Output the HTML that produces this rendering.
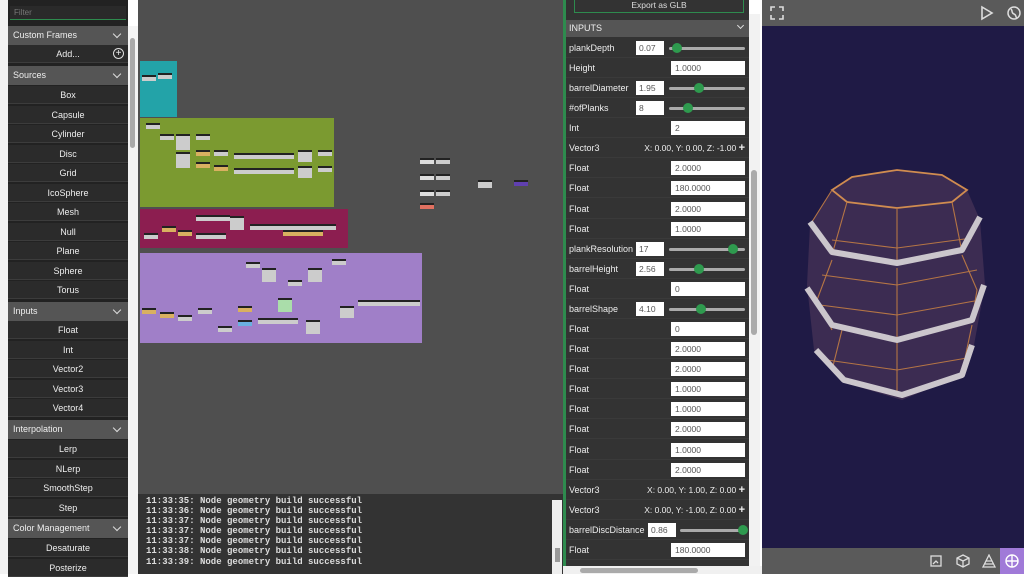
<!DOCTYPE html>
<html><head><meta charset="utf-8"><style>
*{margin:0;padding:0;box-sizing:border-box}
body{width:1024px;height:574px;overflow:hidden;background:#fff;font-family:"Liberation Sans",sans-serif;position:relative}
.a{position:absolute}
#left{left:8px;top:0;width:120px;height:574px;background:#222}
.it{position:absolute;left:0;width:120px;height:18px;background:#2b2b2b;border-bottom:1px solid #3c3c3c;color:#eee;font-size:9px;text-align:center;line-height:18px}
.hd{position:absolute;left:0;width:120px;height:19px;background:#555;color:#eee;font-size:9px;line-height:19px;padding-left:5px}
.hd:after{content:"";position:absolute;right:8px;top:5px;width:5px;height:5px;border-right:1.5px solid #ddd;border-bottom:1.5px solid #ddd;transform:rotate(45deg)}
#graph{left:138px;top:0;width:426px;height:494px;background:#4f4f4f}
.n{position:absolute;height:6px;width:14px;background:#ccc;border-top:2px solid #222}
#log{left:138px;top:494px;width:426px;height:80px;background:#333;font-family:"Liberation Mono",monospace;font-size:9px;color:#ddd;padding:2px 0 0 8px;line-height:10.1px;font-weight:bold}
#props{left:563px;top:0;width:186px;height:574px;background:#333;border-left:3px solid #2e8b4e}
.r{position:absolute;left:0;width:183px;height:20px;border-bottom:1px solid #3a3a3a;color:#eee;font-size:9px;line-height:20px}
.r .l{position:absolute;left:3px}
.r .v{position:absolute;left:105px;top:3px;width:74px;height:14px;background:#fff;color:#555;font-size:8.5px;line-height:14px;padding-left:4px}
.r .s{position:absolute;top:3px;height:14px;width:28px;background:#fff;color:#555;font-size:8.5px;line-height:14px;padding-left:3px}
.r .tr{position:absolute;top:9px;height:3px;background:#aaa;border-radius:2px}
.r .k{position:absolute;top:5px;width:10px;height:10px;border-radius:50%;background:#2e9a4e}
.r .x{position:absolute;right:4px;font-size:8.5px}
#view{left:762px;top:0;width:262px;height:574px;background:#1f1a45}
</style></head><body>
<div class="a" style="left:0;top:0;width:8px;height:574px;background:#f2f2f2"></div>
<div id="left" class="a">
<div class="a" style="left:2px;top:6px;width:116px;height:14px;background:#2a2a2a;border-bottom:1px solid #2e8b4e;color:#777;font-size:8px;padding-left:4px;line-height:14px">Filter</div>
<div class="hd" style="top:26px">Custom Frames</div>
<div class="it" style="top:45px">Add...<span style="position:absolute;right:4px;top:3px;width:11px;height:11px;border:1px solid #ddd;border-radius:50%;line-height:9px;font-size:10px">+</span></div>
<div class="hd" style="top:66px">Sources</div>
<div class="it" style="top:86px">Box</div><div class="it" style="top:105.5px">Capsule</div><div class="it" style="top:125px">Cylinder</div><div class="it" style="top:144.5px">Disc</div><div class="it" style="top:164px">Grid</div><div class="it" style="top:183.5px">IcoSphere</div><div class="it" style="top:203px">Mesh</div><div class="it" style="top:222.5px">Null</div><div class="it" style="top:242px">Plane</div><div class="it" style="top:261.5px">Sphere</div><div class="it" style="top:281px">Torus</div>
<div class="hd" style="top:302px">Inputs</div>
<div class="it" style="top:321px">Float</div><div class="it" style="top:340.5px">Int</div><div class="it" style="top:360px">Vector2</div><div class="it" style="top:379.5px">Vector3</div><div class="it" style="top:399px">Vector4</div>
<div class="hd" style="top:420px">Interpolation</div>
<div class="it" style="top:440px">Lerp</div><div class="it" style="top:459.5px">NLerp</div><div class="it" style="top:479px">SmoothStep</div><div class="it" style="top:498.5px">Step</div>
<div class="hd" style="top:519px">Color Management</div>
<div class="it" style="top:539px">Desaturate</div><div class="it" style="top:558.5px">Posterize</div>
</div>
<div class="a" style="left:128px;top:26px;width:10px;height:548px;background:#f4f4f4"></div>
<div class="a" style="left:130px;top:38px;width:5px;height:110px;background:#aaa;border-radius:3px"></div>
<div id="graph" class="a">
<div class="a" style="left:2px;top:61px;width:37px;height:56px;background:#23a3a8"></div>
<div class="a" style="left:2px;top:118px;width:194px;height:89px;background:#7b9a30"></div>
<div class="a" style="left:2px;top:209px;width:208px;height:39px;background:#8c1e50"></div>
<div class="a" style="left:2px;top:253px;width:282px;height:90px;background:#a07fc8"></div>
<div class="n" style="left:4px;top:75px"></div><div class="n" style="left:20px;top:73px"></div>
<div class="n" style="left:8px;top:123px"></div><div class="n" style="left:22px;top:134px"></div><div class="n" style="left:38px;top:134px;height:16px"></div><div class="n" style="left:38px;top:152px;height:16px"></div><div class="n" style="left:58px;top:134px"></div><div class="n" style="left:58px;top:150px;background:#d9b060"></div><div class="n" style="left:58px;top:162px;background:#d9b060"></div><div class="n" style="left:76px;top:150px"></div><div class="n" style="left:76px;top:165px;background:#d9b060"></div><div class="n" style="left:96px;top:153px;width:60px"></div><div class="n" style="left:96px;top:168px;width:60px"></div><div class="n" style="left:160px;top:150px;height:12px"></div><div class="n" style="left:160px;top:166px;height:12px"></div><div class="n" style="left:180px;top:150px"></div><div class="n" style="left:180px;top:166px"></div>
<div class="n" style="left:6px;top:233px"></div><div class="n" style="left:24px;top:226px;background:#d9b060"></div><div class="n" style="left:40px;top:230px;background:#d9b060"></div><div class="n" style="left:58px;top:215px;width:34px"></div><div class="n" style="left:92px;top:216px;height:14px"></div><div class="n" style="left:58px;top:233px;width:30px"></div><div class="n" style="left:112px;top:224px;width:86px"></div><div class="n" style="left:145px;top:230px;background:#d9b060;width:40px"></div>
<div class="n" style="left:108px;top:262px"></div><div class="n" style="left:124px;top:268px;height:14px"></div><div class="n" style="left:194px;top:259px"></div><div class="n" style="left:170px;top:268px;height:14px"></div><div class="n" style="left:150px;top:280px"></div><div class="n" style="left:140px;top:298px;background:#ada;height:14px"></div><div class="n" style="left:4px;top:308px;background:#d9b060"></div><div class="n" style="left:22px;top:312px;background:#d9b060"></div><div class="n" style="left:40px;top:315px"></div><div class="n" style="left:60px;top:308px"></div><div class="n" style="left:100px;top:306px;background:#d9b060"></div><div class="n" style="left:100px;top:320px;background:#6ab0e0"></div><div class="n" style="left:120px;top:318px;width:40px"></div><div class="n" style="left:80px;top:326px"></div><div class="n" style="left:168px;top:320px;height:14px"></div><div class="n" style="left:202px;top:306px;height:12px"></div><div class="n" style="left:220px;top:300px;width:62px"></div>
<div class="n" style="left:282px;top:158px;background:#ddd"></div><div class="n" style="left:298px;top:158px"></div><div class="n" style="left:282px;top:174px;background:#ddd"></div><div class="n" style="left:298px;top:174px"></div><div class="n" style="left:282px;top:190px;background:#ddd"></div><div class="n" style="left:298px;top:190px"></div><div class="n" style="left:282px;top:203px;background:#e07060"></div>
<div class="n" style="left:340px;top:180px;height:8px"></div><div class="n" style="left:376px;top:180px;background:#6040b0"></div>
</div>
<div id="log" class="a">11:33:35: Node geometry build successful<br>11:33:36: Node geometry build successful<br>11:33:37: Node geometry build successful<br>11:33:37: Node geometry build successful<br>11:33:37: Node geometry build successful<br>11:33:38: Node geometry build successful<br>11:33:39: Node geometry build successful</div>
<div class="a" style="left:552px;top:500px;width:10px;height:74px;background:#eee"></div>
<div class="a" style="left:555px;top:548px;width:5px;height:14px;background:#999"></div>
<div id="props" class="a">
<div class="a" style="left:8px;top:0;width:170px;height:13px;border:1px solid #2e8b4e;border-top:none;color:#ddd;font-size:8.5px;text-align:center;line-height:11px">Export as GLB</div>
<div class="a" style="left:0;top:20px;width:183px;height:17px;background:#555;color:#eee;font-size:9px;line-height:17px;padding-left:3px">INPUTS<span style="position:absolute;right:6px;top:3px;width:5px;height:5px;border-right:1.5px solid #ddd;border-bottom:1.5px solid #ddd;transform:rotate(45deg)"></span></div>
<div class="r" style="top:38px"><span class="l">plankDepth</span><span class="s" style="left:70px">0.07</span><span class="tr" style="left:103px;width:76px"></span><span class="k" style="left:106px"></span></div>
<div class="r" style="top:58px"><span class="l">Height</span><span class="v">1.0000</span></div>
<div class="r" style="top:78px"><span class="l">barrelDiameter</span><span class="s" style="left:70px">1.95</span><span class="tr" style="left:103px;width:76px"></span><span class="k" style="left:128px"></span></div>
<div class="r" style="top:98px"><span class="l">#ofPlanks</span><span class="s" style="left:70px">8</span><span class="tr" style="left:103px;width:76px"></span><span class="k" style="left:117px"></span></div>
<div class="r" style="top:118px"><span class="l">Int</span><span class="v">2</span></div>
<div class="r" style="top:138px"><span class="l">Vector3</span><span class="x">X: 0.00, Y: 0.00, Z: -1.00 <b style="font-size:11px">+</b></span></div>
<div class="r" style="top:158px"><span class="l">Float</span><span class="v">2.0000</span></div>
<div class="r" style="top:178px"><span class="l">Float</span><span class="v">180.0000</span></div>
<div class="r" style="top:199px"><span class="l">Float</span><span class="v">2.0000</span></div>
<div class="r" style="top:219px"><span class="l">Float</span><span class="v">1.0000</span></div>
<div class="r" style="top:239px"><span class="l">plankResolution</span><span class="s" style="left:70px">17</span><span class="tr" style="left:103px;width:76px"></span><span class="k" style="left:162px"></span></div>
<div class="r" style="top:259px"><span class="l">barrelHeight</span><span class="s" style="left:70px">2.56</span><span class="tr" style="left:103px;width:76px"></span><span class="k" style="left:128px"></span></div>
<div class="r" style="top:279px"><span class="l">Float</span><span class="v">0</span></div>
<div class="r" style="top:299px"><span class="l">barrelShape</span><span class="s" style="left:70px">4.10</span><span class="tr" style="left:103px;width:76px"></span><span class="k" style="left:130px"></span></div>
<div class="r" style="top:319px"><span class="l">Float</span><span class="v">0</span></div>
<div class="r" style="top:339px"><span class="l">Float</span><span class="v">2.0000</span></div>
<div class="r" style="top:359px"><span class="l">Float</span><span class="v">2.0000</span></div>
<div class="r" style="top:379px"><span class="l">Float</span><span class="v">1.0000</span></div>
<div class="r" style="top:399px"><span class="l">Float</span><span class="v">1.0000</span></div>
<div class="r" style="top:419px"><span class="l">Float</span><span class="v">2.0000</span></div>
<div class="r" style="top:440px"><span class="l">Float</span><span class="v">1.0000</span></div>
<div class="r" style="top:460px"><span class="l">Float</span><span class="v">2.0000</span></div>
<div class="r" style="top:480px"><span class="l">Vector3</span><span class="x">X: 0.00, Y: 1.00, Z: 0.00 <b style="font-size:11px">+</b></span></div>
<div class="r" style="top:500px"><span class="l">Vector3</span><span class="x">X: 0.00, Y: -1.00, Z: 0.00 <b style="font-size:11px">+</b></span></div>
<div class="r" style="top:520px"><span class="l">barrelDiscDistance</span><span class="s" style="left:82px">0.86</span><span class="tr" style="left:114px;width:65px"></span><span class="k" style="left:172px"></span></div>
<div class="r" style="top:540px"><span class="l">Float</span><span class="v">180.0000</span></div>
</div>
<div class="a" style="left:563px;top:566px;width:199px;height:8px;background:#f0f0f0"></div>
<div class="a" style="left:580px;top:568px;width:118px;height:5px;background:#aaa;border-radius:3px"></div>
<div class="a" style="left:749px;top:14px;width:11px;height:552px;background:#f2f2f2"></div>
<div class="a" style="left:751px;top:170px;width:6px;height:165px;background:#aaa;border-radius:3px"></div>
<div id="view" class="a">
<div class="a" style="left:0;top:0;width:262px;height:26px;background:#5a5a5a"></div>
<svg class="a" style="left:8px;top:6px" width="14" height="14" fill="none" stroke="#ddd" stroke-width="1.6"><path d="M1 5V1h4M9 1h4v4M13 9v4H9M5 13H1V9"/></svg>
<svg class="a" style="left:218px;top:5px" width="14" height="16" fill="none" stroke="#ddd" stroke-width="1.6"><path d="M2 2l10 6-10 6z"/></svg>
<svg class="a" style="left:244px;top:5px" width="16" height="16" fill="none" stroke="#ddd" stroke-width="1.5"><circle cx="8" cy="8" r="6"/><path d="M5 4c2 2 0 4 3 5s1 4 3 3"/></svg>
<div class="a" style="left:0;top:548px;width:262px;height:26px;background:#5a5a5a"></div>
<svg class="a" style="left:168px;top:555px" width="12" height="12" fill="none" stroke="#ddd" stroke-width="1.3"><rect x="1" y="1" width="10" height="10"/><path d="M3 9l3-3 2 2"/></svg>
<svg class="a" style="left:194px;top:554px" width="14" height="14" fill="none" stroke="#ddd" stroke-width="1.3"><path d="M7 1l6 3v6l-6 3-6-3V4zM1 4l6 3 6-3M7 7v6"/></svg>
<svg class="a" style="left:220px;top:554px" width="14" height="14" fill="none" stroke="#ddd" stroke-width="1.3"><path d="M7 1l6 12H1zM4 7h6M3 10h8"/></svg>
<div class="a" style="left:238px;top:548px;width:24px;height:26px;background:#a07ad8"></div>
<svg class="a" style="left:243px;top:554px" width="14" height="14" fill="none" stroke="#fff" stroke-width="1.4"><circle cx="7" cy="7" r="6"/><path d="M1 7h12M7 1v12"/></svg>
<svg class="a" style="left:40px;top:160px" width="190" height="260">
<path d="M30 30L50 17L95 10L140 15L165 30L178 60L183 125L172 185L160 215L100 240L40 222L12 190L5 125L8 65Z" fill="#3c2c52"/>
<g fill="none" stroke="#b57545" stroke-width="1.1">
<path d="M30 30L50 17L95 10L140 15L165 30L150 42L95 48L45 42Z" stroke="#d08c50" stroke-width="1.8"/>
<path d="M45 42L30 95M95 48L95 105M150 42L160 92M30 30L8 65"/>
<path d="M30 100L15 140L30 170M95 108V180M160 95L175 130L170 160"/>
<path d="M40 170L30 210M95 180V235M170 165L160 212"/>
<path d="M20 115L95 125L175 110M18 145L95 155L178 140M25 200L95 210L165 198M30 80L95 88L170 78"/>
</g>
<g fill="none" stroke="#cbc6cc" stroke-width="6" stroke-linejoin="round">
<path d="M8 62L30 92L95 103L160 90L178 57"/>
<path d="M5 128L30 165L95 180L170 160L182 125"/>
<path d="M14 190L42 220L100 235L160 215L170 185"/>
</g></svg>
</div>
</body></html>
